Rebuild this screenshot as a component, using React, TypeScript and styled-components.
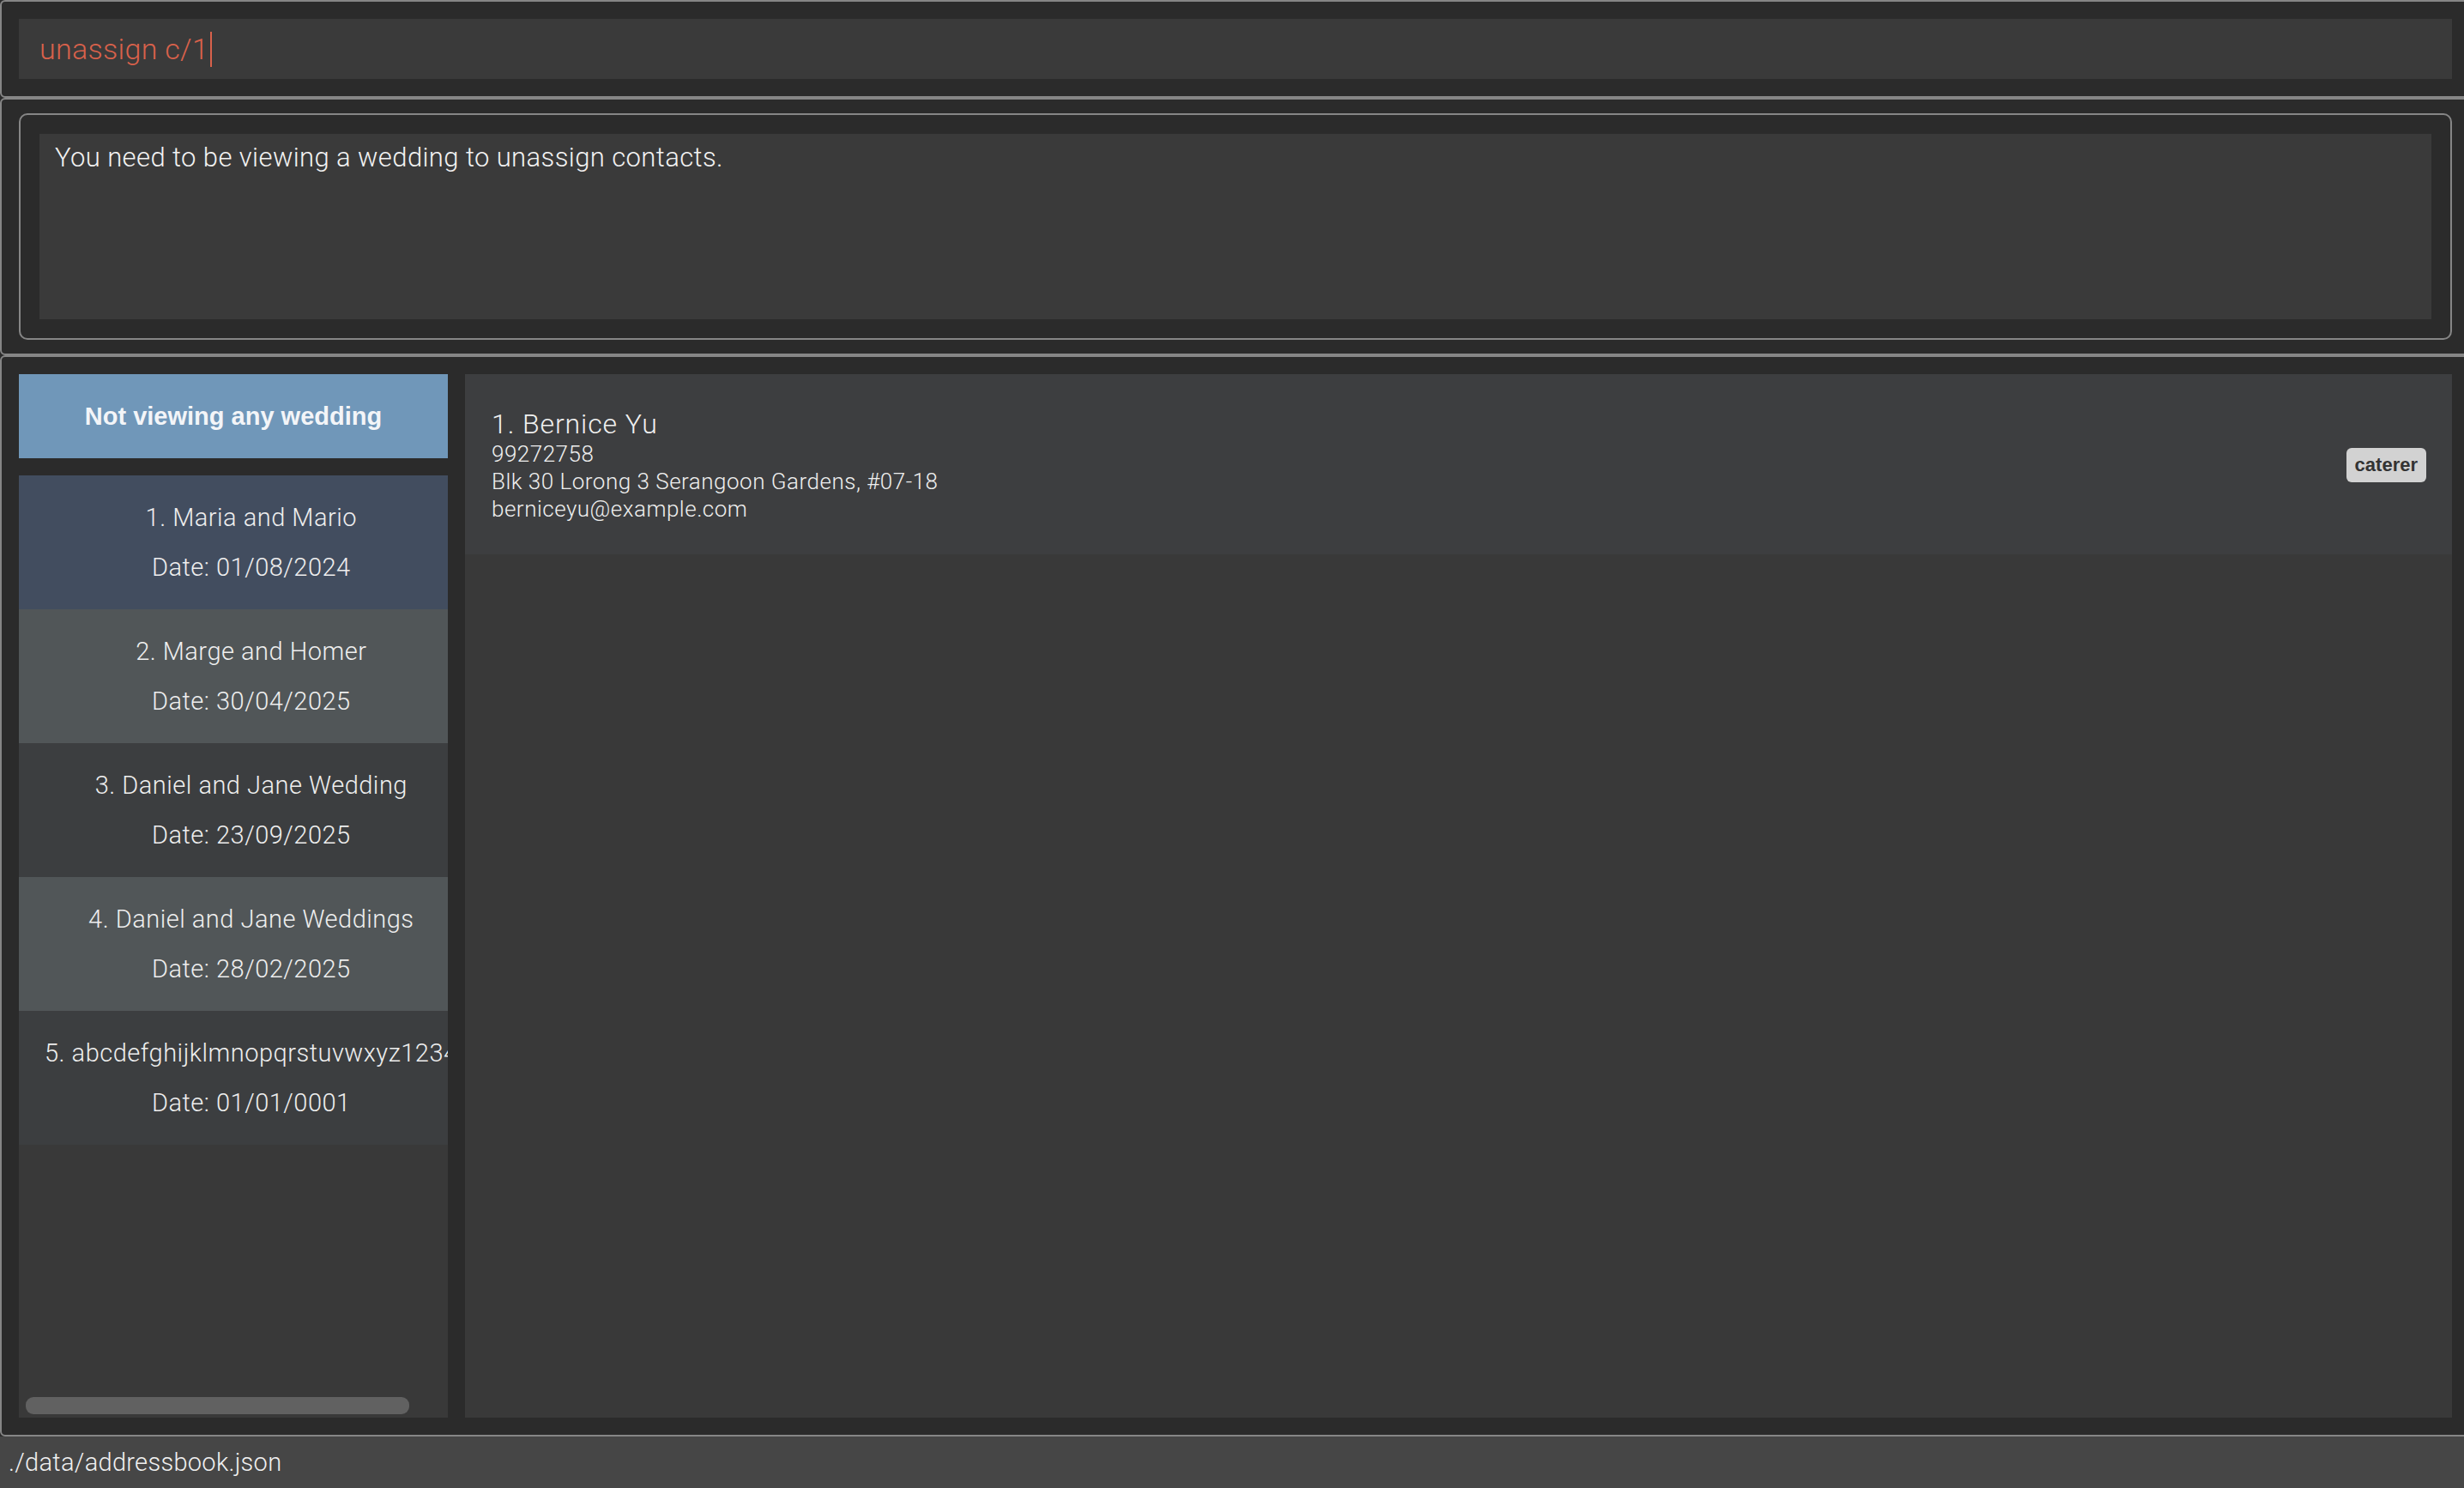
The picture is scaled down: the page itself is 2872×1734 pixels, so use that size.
import styled, { createGlobalStyle } from 'styled-components';

interface Wedding {
  id: number;
  name: string;
  date: string;
}

interface Person {
  id: number;
  name: string;
  phone: string;
  address: string;
  email: string;
  tags: string[];
}

const GlobalStyle = createGlobalStyle`
  html, body {
    margin: 0;
    padding: 0;
    height: 100%;
    overflow: hidden;
    background-color: #2b2b2b;
  }
  #root {
    height: 100%;
  }
`;

const lightFont = `'Roboto', 'Liberation Sans', sans-serif`;
const boldFont = `'Liberation Sans', 'Roboto', sans-serif`;

const Window = styled.div`
  display: flex;
  flex-direction: column;
  height: 100vh;
  width: calc(100% + 8px);
  background-color: #2b2b2b;
  font-family: ${lightFont};
  font-weight: 300;
  letter-spacing: 0.5px;
  color: #f0f0f0;
`;

const Pane = styled.div<{ $pad: string; $grow?: boolean }>`
  box-sizing: border-box;
  border: 2px solid #868686;
  border-radius: 6px;
  background-color: #2b2b2b;
  padding: ${(p) => p.$pad};
  display: flex;
  flex: ${(p) => (p.$grow ? '1 1 auto' : '0 0 auto')};
  min-height: 0;
`;

const CommandField = styled.div`
  flex: 1;
  height: 70px;
  box-sizing: border-box;
  background-color: #3a3a3a;
  padding-left: 24px;
  display: flex;
  align-items: center;
  font-size: 34px;
  letter-spacing: 0.3px;
  color: #d8614b;
`;

const Caret = styled.span`
  display: inline-block;
  width: 2px;
  height: 41px;
  margin-left: 2px;
  background-color: #d8614b;
`;

const ResultFrame = styled.div`
  flex: 1;
  height: 264px;
  box-sizing: border-box;
  border: 2px solid #868686;
  border-radius: 10px;
  padding: 22px;
  display: flex;
`;

const ResultText = styled.div`
  flex: 1;
  background-color: #3a3a3a;
  padding: 9px 18px;
  font-size: 31px;
  line-height: 1.2;
  letter-spacing: 0.4px;
  color: #f2f2f2;
`;

const Columns = styled.div`
  flex: 1;
  display: flex;
  gap: 20px;
  min-height: 0;
`;

const LeftColumn = styled.div`
  width: 500px;
  flex: 0 0 500px;
  display: flex;
  flex-direction: column;
  gap: 20px;
`;

const ViewingHeader = styled.div`
  height: 98px;
  background-color: #7097b9;
  display: flex;
  align-items: center;
  justify-content: center;
  font-family: ${boldFont};
  font-weight: 700;
  font-size: 29px;
  letter-spacing: 0;
  color: #f3f5f8;
`;

const WeddingList = styled.div`
  position: relative;
  flex: 1;
  background-color: #393939;
  overflow: hidden;
`;

const WeddingTrack = styled.div`
  width: max-content;
  min-width: 100%;
`;

const WeddingCell = styled.div<{ $tone: 'selected' | 'light' | 'dark' }>`
  height: 156px;
  box-sizing: border-box;
  padding: 20px 30px;
  display: flex;
  flex-direction: column;
  align-items: center;
  font-size: 29px;
  line-height: 58px;
  white-space: nowrap;
  color: #eeeeee;
  background-color: ${(p) =>
    p.$tone === 'selected' ? '#424d5f' : p.$tone === 'light' ? '#515658' : '#3c3e40'};
`;

const ScrollThumb = styled.div`
  position: absolute;
  left: 8px;
  bottom: 4px;
  width: 447px;
  height: 20px;
  border-radius: 9px;
  background-color: #616161;
`;

const PersonList = styled.div`
  flex: 1;
  background-color: #393939;
  overflow: hidden;
`;

const PersonCard = styled.div`
  display: flex;
  align-items: center;
  justify-content: space-between;
  padding: 39px 30px 37px 31px;
  background-color: #3d3e40;
`;

const PersonInfo = styled.div`
  display: flex;
  flex-direction: column;
`;

const PersonName = styled.div`
  font-size: 32px;
  line-height: 38px;
  letter-spacing: 0.9px;
  color: #f0f0f0;
`;

const PersonDetail = styled.div`
  font-size: 26px;
  line-height: 32px;
  color: #eeeeee;
`;

const Tag = styled.span`
  font-family: ${boldFont};
  font-weight: 700;
  font-size: 22px;
  line-height: 40px;
  letter-spacing: 0;
  padding: 0 10px;
  border-radius: 6px;
  background-color: #d2d2d2;
  color: #333333;
`;

const StatusBar = styled.div`
  flex: 0 0 60px;
  height: 60px;
  background-color: #464646;
  padding-left: 10px;
  font-size: 29px;
  line-height: 60px;
  letter-spacing: 0.3px;
  color: #f0f0f0;
`;

const weddings: Wedding[] = [
  { id: 1, name: 'Maria and Mario', date: '01/08/2024' },
  { id: 2, name: 'Marge and Homer', date: '30/04/2025' },
  { id: 3, name: 'Daniel and Jane Wedding', date: '23/09/2025' },
  { id: 4, name: 'Daniel and Jane Weddings', date: '28/02/2025' },
  { id: 5, name: 'abcdefghijklmnopqrstuvwxyz1234', date: '01/01/0001' },
];

const persons: Person[] = [
  {
    id: 1,
    name: 'Bernice Yu',
    phone: '99272758',
    address: 'Blk 30 Lorong 3 Serangoon Gardens, #07-18',
    email: 'berniceyu@example.com',
    tags: ['caterer'],
  },
];

export default function App() {
  return (
    <>
      <GlobalStyle />
      <Window>
        <Pane $pad="20px">
          <CommandField>
            unassign c/1
            <Caret />
          </CommandField>
        </Pane>

        <Pane $pad="16px 20px">
          <ResultFrame>
            <ResultText>You need to be viewing a wedding to unassign contacts.</ResultText>
          </ResultFrame>
        </Pane>

        <Pane $pad="20px" $grow>
          <Columns>
            <LeftColumn>
              <ViewingHeader>Not viewing any wedding</ViewingHeader>
              <WeddingList>
                <WeddingTrack>
                  {weddings.map((w, i) => (
                    <WeddingCell
                      key={w.id}
                      $tone={i === 0 ? 'selected' : i % 2 === 1 ? 'light' : 'dark'}
                    >
                      <div>
                        {w.id}. {w.name}
                      </div>
                      <div>Date: {w.date}</div>
                    </WeddingCell>
                  ))}
                </WeddingTrack>
                <ScrollThumb />
              </WeddingList>
            </LeftColumn>

            <PersonList>
              {persons.map((p) => (
                <PersonCard key={p.id}>
                  <PersonInfo>
                    <PersonName>
                      {p.id}. {p.name}
                    </PersonName>
                    <PersonDetail>{p.phone}</PersonDetail>
                    <PersonDetail>{p.address}</PersonDetail>
                    <PersonDetail>{p.email}</PersonDetail>
                  </PersonInfo>
                  {p.tags.map((t) => (
                    <Tag key={t}>{t}</Tag>
                  ))}
                </PersonCard>
              ))}
            </PersonList>
          </Columns>
        </Pane>

        <StatusBar>./data/addressbook.json</StatusBar>
      </Window>
    </>
  );
}
